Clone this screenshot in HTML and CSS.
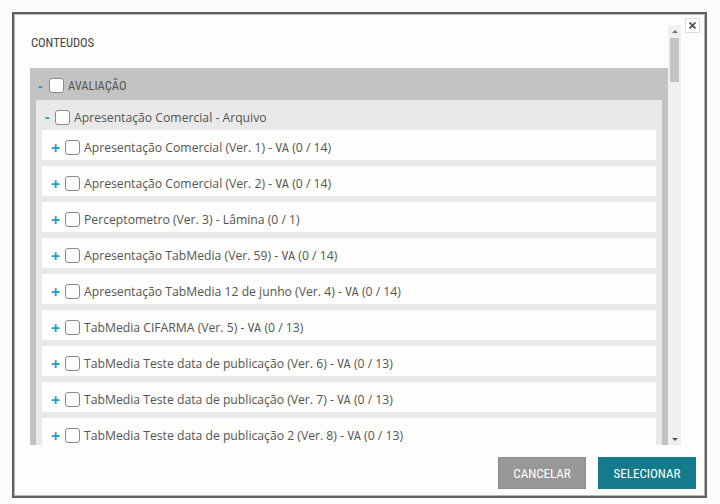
FILE: index.html
```html
<!DOCTYPE html>
<html lang="pt-BR">
<head>
    <meta charset="UTF-8">
    <title>Conteudos</title>
    <link rel="stylesheet" href="styles.css">
</head>
<body>
    <div class="modal">
        <a href="#" class="close" title="Fechar">
            <svg width="7" height="7" viewBox="0 0 7 7"><path d="M0.5 0.5 L6.5 6.5 M6.5 0.5 L0.5 6.5" stroke="#555" stroke-width="1.8"/></svg>
        </a>
        <div class="modal-body">
            <div class="scroll-area">
                <div class="title">CONTEUDOS</div>
                <div class="tree">
                    <div class="node-root">
                        <span class="toggle">-</span>
                        <span class="check"></span>
                        <span class="label-root">AVALIAÇÃO</span>
                    </div>
                    <div class="group">
                        <div class="node-group">
                            <span class="toggle">-</span>
                            <span class="check"></span>
                            <span>Apresentação Comercial - Arquivo</span>
                        </div>
                        <div class="item"><span class="toggle plus">+</span><span class="check"></span><span>Apresentação Comercial (Ver. 1) - <i class="va">VA</i> (0 / 14)</span></div>
                        <div class="item"><span class="toggle plus">+</span><span class="check"></span><span>Apresentação Comercial (Ver. 2) - <i class="va">VA</i> (0 / 14)</span></div>
                        <div class="item"><span class="toggle plus">+</span><span class="check"></span><span>Perceptometro (Ver. 3) - Lâmina (0 / 1)</span></div>
                        <div class="item"><span class="toggle plus">+</span><span class="check"></span><span>Apresentação TabMedia (Ver. 59) - <i class="va">VA</i> (0 / 14)</span></div>
                        <div class="item"><span class="toggle plus">+</span><span class="check"></span><span>Apresentação TabMedia 12 de junho (Ver. 4) - <i class="va">VA</i> (0 / 14)</span></div>
                        <div class="item"><span class="toggle plus">+</span><span class="check"></span><span>TabMedia CIFARMA (Ver. 5) - <i class="va">VA</i> (0 / 13)</span></div>
                        <div class="item"><span class="toggle plus">+</span><span class="check"></span><span>TabMedia Teste data de publicação (Ver. 6) - <i class="va">VA</i> (0 / 13)</span></div>
                        <div class="item"><span class="toggle plus">+</span><span class="check"></span><span>TabMedia Teste data de publicação (Ver. 7) - <i class="va">VA</i> (0 / 13)</span></div>
                        <div class="item"><span class="toggle plus">+</span><span class="check"></span><span>TabMedia Teste data de publicação 2 (Ver. 8) - <i class="va">VA</i> (0 / 13)</span></div>
                    </div>
                </div>
            </div>
            <div class="scrollbar">
                <span class="arrow up"></span>
                <div class="track"><div class="thumb"></div></div>
                <span class="arrow down"></span>
            </div>
        </div>
        <div class="modal-footer">
            <a href="#" class="btn btn-cancel">CANCELAR</a>
            <a href="#" class="btn btn-select">SELECIONAR</a>
        </div>
    </div>
</body>
</html>
```

FILE: styles.css
```css
body {
    margin: 0;
    background-color: #fcfcfa;
    font-family: "Open Sans", "DejaVu Sans", sans-serif;
    color: #555;
}
.modal {
    position: relative;
    box-sizing: border-box;
    width: 695px;
    height: 486px;
    margin: 12px 0 0 12px;
    border: 2px solid #5f5f5f;
    box-shadow: inset 0 0 0 1px #b8b8b8;
    background-color: #fdfdfb;
}
.close {
    position: absolute;
    top: 4px;
    right: 5px;
    width: 15px;
    height: 15px;
    box-sizing: border-box;
    border: 1px solid #dcdcdc;
    background-color: #fff;
    display: flex;
    align-items: center;
    justify-content: center;
}
.modal-body {
    display: flex;
    height: 420px;
    margin: 11px 24px 0 16px;
}
.scroll-area {
    flex: 1;
    overflow: hidden;
}
.title {
    box-sizing: border-box;
    height: 43px;
    padding: 11px 0 0 1px;
    line-height: 14px;
    font-family: "Liberation Sans Narrow", "Roboto Condensed", "Arial Narrow", sans-serif;
    font-size: 12.5px;
    color: #444;
}
.tree {
    background-color: #c3c3c3;
    padding-bottom: 6px;
}
.toggle {
    color: #1f9cbd;
    font-weight: bold;
    font-size: 14px;
    line-height: 14px;
}
.check {
    display: inline-block;
    flex-shrink: 0;
    box-sizing: border-box;
    width: 15px;
    height: 15px;
    border: 1px solid #8a8a8a;
    border-radius: 3px;
    background-color: #fff;
}
.node-root {
    display: flex;
    align-items: center;
    height: 32px;
    padding: 3px 0 0 8px;
    box-sizing: border-box;
}
.node-root .toggle {
    width: 11px;
}
.node-root .check {
    margin-right: 4px;
}
.label-root {
    font-family: "Liberation Sans Narrow", "Roboto Condensed", "Arial Narrow", sans-serif;
    font-size: 12.5px;
    color: #555;
}
.group {
    margin: 0 6px;
    padding: 0 6px 0 6px;
    background-color: #e9e9e9;
}
.node-group {
    display: flex;
    align-items: center;
    height: 30px;
    padding: 4px 0 0 3px;
    box-sizing: border-box;
    font-size: 12.2px;
}
.node-group .toggle {
    width: 10px;
}
.node-group .check {
    margin-right: 4px;
}
.item {
    display: flex;
    align-items: center;
    height: 30px;
    margin-bottom: 6px;
    padding: 5px 0 0 9px;
    box-sizing: border-box;
    background-color: #fdfdfb;
    font-size: 12.2px;
    white-space: nowrap;
}
.item .toggle {
    width: 14px;
    font-size: 16px;
}
.item .check {
    margin-right: 4px;
}
.va {
    font-style: normal;
    font-family: "Liberation Sans Narrow", "Roboto Condensed", "Arial Narrow", sans-serif;
    font-size: 12.5px;
}
.scrollbar {
    width: 13px;
    display: flex;
    flex-direction: column;
    background-color: #f0f0ee;
}
.track {
    flex: 1;
    padding: 1px 2px;
}
.thumb {
    height: 44px;
    background-color: #c4c4c4;
}
.arrow {
    height: 12px;
    display: flex;
    align-items: center;
    justify-content: center;
}
.arrow::after {
    content: "";
    border-left: 3px solid transparent;
    border-right: 3px solid transparent;
}
.arrow.up::after {
    border-bottom: 3px solid #777;
}
.arrow.down::after {
    border-top: 3px solid #555;
}
.modal-footer {
    display: flex;
    justify-content: flex-end;
    gap: 12px;
    padding: 12px 9px 0 0;
}
.btn {
    display: flex;
    align-items: center;
    justify-content: center;
    height: 32px;
    color: #fff;
    text-decoration: none;
    font-family: "Liberation Sans Narrow", "Roboto Condensed", "Arial Narrow", sans-serif;
    font-size: 13px;
}
.btn-cancel {
    width: 88px;
    background-color: #989898;
    border: 1px solid #8c8c8c;
    box-sizing: border-box;
}
.btn-select {
    width: 98px;
    background-color: #137b8b;
}
```
